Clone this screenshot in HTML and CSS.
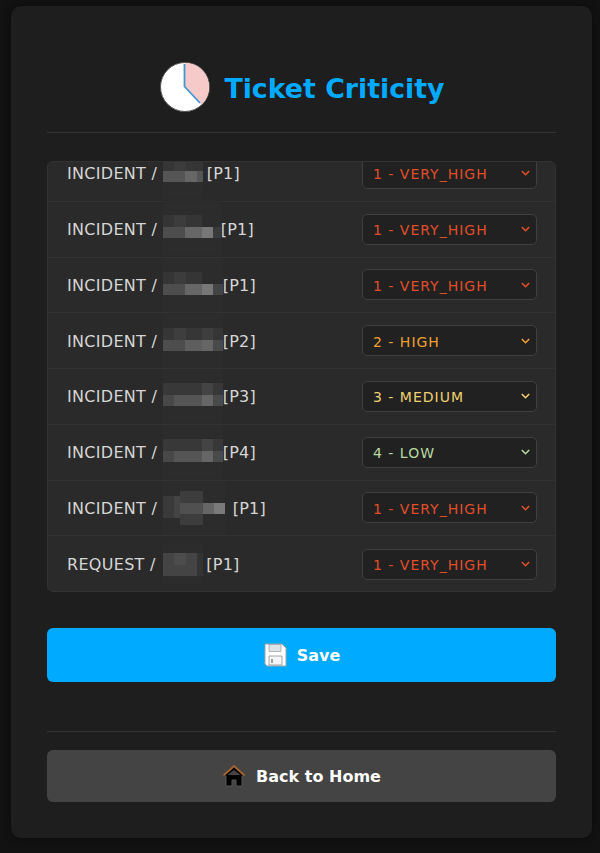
FILE: index.html
```html
<!DOCTYPE html>
<html lang="en">
<head>
<meta charset="utf-8">
<title>Ticket Criticity</title>
<link rel="stylesheet" href="styles.css">
</head>
<body>
<main class="card">
  <header class="head">
    <svg class="clock" width="52" height="52" viewBox="0 0 52 52">
      <circle cx="26" cy="26" r="24.500" fill="#fff" stroke="#555" stroke-width="1"/>
      <path d="M26 26V2A24 24 0 0 1 42.500 43.500Z" fill="#f7caca"/>
      <path d="M25.500 3V25.500L41 42" fill="none" stroke="#3f97d3" stroke-width="1.800"/>
    </svg>
    <h1 class="title">Ticket Criticity</h1>
  </header>
  <div class="list">
    <div class="rows">
      <div class="row"><span class="label">INCIDENT / <svg class="blur up6" width="44" height="23" viewBox="0 0 44 23"><path fill="#2c2c2c" d="M0-24h40v64H0z"/><path fill="#353535" d="M0 0h40v12H0z"/><path fill="#3c3c3c" d="M11 0h12v12H11z"/><path fill="#555" d="M0 12h40v11H0z"/><path fill="#666" d="M22 12h12v11H22z"/></svg>[P1]</span><select class="sel vh"><option>1 - VERY_HIGH</option></select></div>
      <div class="row"><span class="label">INCIDENT / <svg class="blur up6" width="58" height="23" viewBox="0 0 58 23"><path fill="#2c2c2c" d="M0-14h58v54H0z"/><path fill="#353535" d="M0 0h39v12H0z"/><path fill="#3c3c3c" d="M11 0h12v12H11z"/><path fill="#4d4d4d" d="M0 12h39v11H0z"/><path fill="#666" d="M22 12h17v11H22z"/><path fill="#777" d="M39 12h11v11H39z"/><path fill="#3a3a3a" d="M50 12h8v11h-8z"/></svg>[P1]</span><select class="sel vh"><option>1 - VERY_HIGH</option></select></div>
      <div class="row"><span class="label">INCIDENT / <svg class="blur up4" width="60" height="23" viewBox="0 0 60 23"><path fill="#2c2c2c" d="M0-14h60v54H0z"/><path fill="#353535" d="M0 0h39v12H0z"/><path fill="#3c3c3c" d="M11 0h12v12H11z"/><path fill="#4d4d4d" d="M0 12h39v11H0z"/><path fill="#666" d="M22 12h17v11H22z"/><path fill="#777" d="M39 12h11v11H39z"/><path fill="#444" d="M50 12h10v11H50z"/></svg>[P1]</span><select class="sel vh"><option>1 - VERY_HIGH</option></select></div>
      <div class="row"><span class="label">INCIDENT / <svg class="blur up4" width="60" height="23" viewBox="0 0 60 23"><path fill="#2c2c2c" d="M0-14h60v54H0z"/><path fill="#363636" d="M0 0h60v12H0z"/><path fill="#3e3e3e" d="M11 0h12v12H11zM39 0h11v12H39z"/><path fill="#4d4d4d" d="M0 12h39v11H0z"/><path fill="#5e5e5e" d="M22 12h17v11H22z"/><path fill="#666" d="M39 12h11v11H39z"/><path fill="#4a4a4a" d="M50 12h10v11H50z"/></svg>[P2]</span><select class="sel hi"><option>2 - HIGH</option></select></div>
      <div class="row"><span class="label">INCIDENT / <svg class="blur up4" width="60" height="23" viewBox="0 0 60 23"><path fill="#2c2c2c" d="M0-14h60v54H0z"/><path fill="#383838" d="M0 0h60v12H0z"/><path fill="#444" d="M39 0h11v12H39z"/><path fill="#484848" d="M0 12h39v11H0z"/><path fill="#555" d="M11 12h28v11H11z"/><path fill="#666" d="M39 12h11v11H39z"/><path fill="#4a4a4a" d="M50 12h10v11H50z"/></svg>[P3]</span><select class="sel me"><option>3 - MEDIUM</option></select></div>
      <div class="row"><span class="label">INCIDENT / <svg class="blur up4" width="60" height="23" viewBox="0 0 60 23"><path fill="#2c2c2c" d="M0-14h60v54H0z"/><path fill="#383838" d="M0 0h60v12H0z"/><path fill="#444" d="M39 0h11v12H39z"/><path fill="#484848" d="M0 12h39v11H0z"/><path fill="#555" d="M11 12h28v11H11z"/><path fill="#666" d="M39 12h11v11H39z"/><path fill="#4a4a4a" d="M50 12h10v11H50z"/></svg>[P4]</span><select class="sel lo"><option>4 - LOW</option></select></div>
      <div class="row"><span class="label">INCIDENT / <svg class="blur" width="70" height="34" viewBox="0 0 70 34"><path fill="#2c2c2c" d="M0-10h62v54H0z"/><path fill="#3a3a3a" d="M0 5h17v22H0z"/><path fill="#444" d="M11 5h6v22h-6z"/><path fill="#3d3d3d" d="M17 0h23v34H17z"/><path fill="#505050" d="M17 12h23v11H17z"/><path fill="#666" d="M40 12h11v11H40z"/><path fill="#7a7a7a" d="M51 12h11v11H51z"/></svg>[P1]</span><select class="sel vh"><option>1 - VERY_HIGH</option></select></div>
      <div class="row"><span class="label">REQUEST / <svg class="blur shift" width="43" height="23" viewBox="0 0 43 23"><path fill="#2c2c2c" d="M0-10h40v40H0z"/><path fill="#444" d="M0 0h34v23H0z"/><path fill="#4c4c4c" d="M11 0h12v12H11z"/><path fill="#333" d="M34 0h6v23h-6z"/></svg>[P1]</span><select class="sel vh"><option>1 - VERY_HIGH</option></select></div>
    </div>
  </div>
  <button class="btn save" type="button">
    <svg width="24" height="24" viewBox="0 0 24 24"><path d="M2 1h17l4 4v18H4l-2-2z" fill="#fff" stroke="#9aa3a8" stroke-width="1"/><path d="M6 1.500h12v7H6z" fill="#dfe3e6" stroke="#9aa3a8" stroke-width=".8"/><path d="M6 13h13v9H6z" fill="#f5f5f5" stroke="#8a9298" stroke-width=".8"/><path d="M8 16h2v4H8z" fill="#9aa3a8"/></svg>
    <span>Save</span>
  </button>
  <div class="foot">
    <button class="btn home" type="button">
      <svg width="24" height="24" viewBox="0 0 24 24"><path d="M4 11v11h6v-6h4v6h6V11" fill="#000" stroke="#555" stroke-width="1"/><path d="M12 3 21 11l-1 1-8-6-8 6-1-1z" fill="#000"/><path d="M1.500 11.500 12 2l10.500 9.500" fill="none" stroke="#a5632f" stroke-width="1.800"/></svg>
      <span>Back to Home</span>
    </button>
  </div>
</main>
</body>
</html>
```
FILE: styles.css
```css
* { box-sizing: border-box; }
html, body { height: 100%; }
body {
  margin: 0;
  background: #121212;
  font-family: "DejaVu Sans", sans-serif;
  padding: 6px 8px 15px 11px;
  overflow: hidden;
}
.card {
  height: 832px;
  background: #1e1e1e;
  border-radius: 10px;
  padding: 56px 36px 36px;
  box-shadow: 0 0 8px rgba(0, 0, 0, .4);
}
.head {
  display: flex;
  align-items: center;
  justify-content: center;
  gap: 13px;
  height: 71px;
  padding: 0 0 17px 1px;
  margin-bottom: 28px;
  border-bottom: 1px solid #333;
}
.clock { display: block; margin-bottom: 3px; }
.title {
  margin: 0;
  color: #00aaff;
  font-size: 26.8px;
  font-weight: 700;
  line-height: 34px;
}
.list {
  height: 431px;
  overflow: hidden;
  background: #2a2a2a;
  border: 1px solid #333;
  border-radius: 6px;
}
.rows { margin-top: -16px; }
.row {
  display: flex;
  align-items: center;
  justify-content: space-between;
  height: 55.75px;
  padding: 1px 18px 0 19px;
  border-bottom: 1px solid #333;
}
.row:last-child { border-bottom: 0; }
.label {
  display: flex;
  align-items: center;
  color: #d6d6d6;
  font-size: 16px;
  letter-spacing: .3px;
  white-space: pre;
}
.blur { display: block; flex: none; overflow: visible; }
.up6 { margin-bottom: 6px; }
.up4 { margin-bottom: 4px; }
.shift { margin-left: 2px; }
.sel {
  appearance: none;
  width: 175px;
  height: 31px;
  margin-top: -1px;
  padding: 2px 24px 0 10px;
  background-color: #212121;
  background-repeat: no-repeat;
  background-position: right 6px center;
  background-size: 9px 6px;
  border: 1px solid #404040;
  border-radius: 5px;
  font: 14px "DejaVu Sans", sans-serif;
  letter-spacing: 1px;
}
.vh {
  color: #e04e2a;
  background-image: url("data:image/svg+xml,%3Csvg xmlns='http://www.w3.org/2000/svg' viewBox='0 0 9 6'%3E%3Cpath d='M.8 1l3.700 3.700L8.200 1' fill='none' stroke='%23e04e2a' stroke-width='1.600'/%3E%3C/svg%3E");
}
.hi {
  color: #f0a030;
  background-image: url("data:image/svg+xml,%3Csvg xmlns='http://www.w3.org/2000/svg' viewBox='0 0 9 6'%3E%3Cpath d='M.8 1l3.700 3.700L8.200 1' fill='none' stroke='%23f0a030' stroke-width='1.600'/%3E%3C/svg%3E");
}
.me {
  color: #f0d070;
  background-image: url("data:image/svg+xml,%3Csvg xmlns='http://www.w3.org/2000/svg' viewBox='0 0 9 6'%3E%3Cpath d='M.8 1l3.700 3.700L8.200 1' fill='none' stroke='%23f0d070' stroke-width='1.600'/%3E%3C/svg%3E");
}
.lo {
  color: #b8d8a0;
  background-image: url("data:image/svg+xml,%3Csvg xmlns='http://www.w3.org/2000/svg' viewBox='0 0 9 6'%3E%3Cpath d='M.8 1l3.700 3.700L8.200 1' fill='none' stroke='%23b8d8a0' stroke-width='1.600'/%3E%3C/svg%3E");
}
.btn {
  display: flex;
  align-items: center;
  justify-content: center;
  gap: 10px;
  width: 100%;
  border: 0;
  border-radius: 6px;
  font: 700 16px "DejaVu Sans", sans-serif;
  color: #fff;
}
.save { height: 54px; margin-top: 36px; background: #00aaff; }
.foot { margin-top: 49px; padding-top: 18px; border-top: 1px solid #333; }
.home { height: 52px; background: #444; }
```
